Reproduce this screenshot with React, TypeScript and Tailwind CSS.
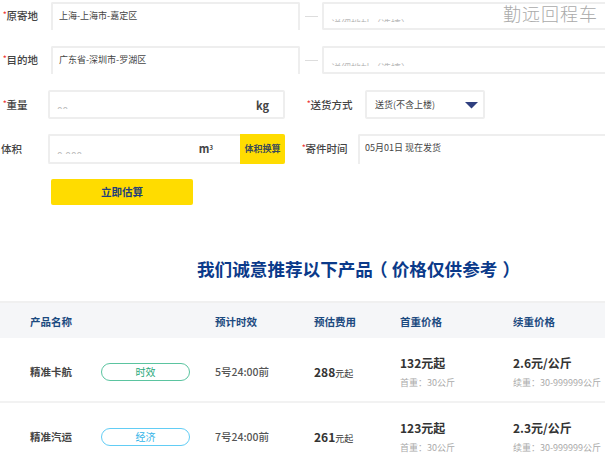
const font = "font-['Noto_Sans_CJK_SC','Noto_Sans',sans-serif]";

const Label = ({ text, star = true, className = '' }: { text: string; star?: boolean; className?: string }) => (
  <div className={`shrink-0 flex items-center text-[10.500px] font-medium leading-none text-[#444] ${className}`}>
    {star && <span className="text-[#e33] text-[7px] font-bold -mt-[3px]">*</span>}
    {text}
  </div>
);

// placeholder text is cut off by the bottom of its box in the source
const Clipped = ({ text }: { text: string }) => (
  <div className="h-[3px] overflow-hidden text-[10px] leading-[10px] text-[#bbbbbb] whitespace-nowrap">{text}</div>
);

const AddressRow = ({ label, value }: { label: string; value: string }) => (
  <div className="flex h-[28px] mb-[16px]">
    <Label text={label} className="w-[51px] pl-[3px] h-[28px]" />
    <div className="w-[249px] border-2 border-b-0 border-[#eeeeee] rounded-t-[2px] pl-[6px] pt-[5px] text-[9px] leading-[14px] text-[#444]">
      {value}
    </div>
    <div className="w-[13px] h-px bg-[#dddddd] ml-[5px] mr-[4px] mt-[14px]" />
    <div className="flex-1 border-2 border-r-0 border-[#eeeeee] rounded-l-[2px] pl-[7px] pt-[15px]">
      <Clipped text="详细地址（选填）" />
    </div>
  </div>
);

const products = [
  { name: '精准卡航', tag: '时效', tagClass: 'border-[#5bc4a0] text-[#2aa87c]', time: '5号24:00前', fee: '288', first: '132元起', next: '2.6元/公斤' },
  { name: '精准汽运', tag: '经济', tagClass: 'border-[#62cdf5] text-[#35b5e8]', time: '7号24:00前', fee: '261', first: '123元起', next: '2.3元/公斤' },
];

const cols = 'grid grid-cols-[71px_114px_99px_86px_113px_1fr] pl-[30px]';

export default function App() {
  return (
    <div className={`relative w-[605px] h-[456px] overflow-hidden bg-white ${font}`}>
      <div className="absolute right-[7px] top-[1px] text-[18px] font-light leading-[24px] tracking-[1px] text-[#aaaaaa]">
        勤远回程车
      </div>

      <div className="pt-[2px]">
        <AddressRow label="原寄地" value="上海-上海市-嘉定区" />
        <AddressRow label="目的地" value="广东省-深圳市-罗湖区" />

        <div className="flex h-[29px] mb-[15px]">
          <Label text="重量" className="w-[48px] pl-[3px] pt-[1px]" />
          <div className="w-[237px] flex border-2 border-[#eeeeee] rounded-[2px] pl-[7px] pr-[14px] justify-between">
            <div className="pt-[14px]"><Clipped text="00" /></div>
            <span className="text-[11px] font-bold leading-[27px] text-[#444]">kg</span>
          </div>
          <Label text="送货方式" className="w-[57px] ml-[22px] pt-[1px]" />
          <div className="w-[120px] ml-px flex items-center justify-between border-2 border-[#eeeeee] rounded-[2px] pl-[8px] pr-[4px] text-[9px] text-[#444]">
            送货(不含上楼)
            <svg width="14" height="8" viewBox="0 0 14 8"><path d="M0 1h13L6.500 7.500z" fill="#2f3f7f" /></svg>
          </div>
        </div>

        <div className="flex h-[30px] mb-[15px]">
          <Label text="体积" star={false} className="w-[48px] pl-px text-[#444]" />
          <div className="w-[237px] flex border-2 border-r-0 border-[#eeeeee] rounded-[2px] pl-[7px]">
            <div className="flex-1 pt-[15px]"><Clipped text="0.000" /></div>
            <span className="text-[11px] font-bold leading-[24px] text-[#444] mr-[27px]">m<sup className="text-[6px]">3</sup></span>
            <div className="w-[45px] -my-[2px] flex items-center justify-center bg-[#ffdc00] rounded-r-[2px] text-[9px] font-bold text-[#3b4a5a]">体积换算</div>
          </div>
          <Label text="寄件时间" className="w-[56px] ml-[17px]" />
          <div className="flex-1 border-2 border-b-0 border-r-0 border-[#eeeeee] rounded-tl-[2px] pl-[5px] pt-[5px] text-[9px] leading-[14px] text-[#444]">
            05月01日 现在发货
          </div>
        </div>

        <div className="w-[142px] h-[26px] ml-[51px] flex items-center justify-center bg-[#ffdc00] rounded-[2px] text-[10.500px] font-bold text-[#1f3f7a]">
          立即估算
        </div>
      </div>

      <h2 className="mt-[51px] pl-[197px] h-[30px] text-[17.600px] font-bold leading-[26px] whitespace-nowrap text-[#0b3a8a]">
        我们诚意推荐以下产品<span className="inline-block ml-[5px] mr-[5px] [font-feature-settings:'palt']">（</span>价格仅供参考<span className="inline-block ml-[6px] [font-feature-settings:'palt']">）</span>
      </h2>

      <div className="mt-[15px] border-t-2 border-[#f0f0f0]">
        <div className={`${cols} h-[35px] pt-[2px] items-center bg-[#f5f6f8] text-[10.500px] font-bold text-[#1c4a80]`}>
          <span className="col-span-2">产品名称</span>
          <span>预计时效</span>
          <span>预估费用</span>
          <span>首重价格</span>
          <span>续重价格</span>
        </div>
        {products.map((p) => (
          <div key={p.name} className={`${cols} h-[65px] pt-[4px] items-center border-b-2 border-[#f2f2f2] whitespace-nowrap`}>
            <span className="text-[10.500px] font-bold text-[#444]">{p.name}</span>
            <span className={`w-[89px] h-[18px] flex items-center justify-center rounded-full border text-[10px] ${p.tagClass}`}>{p.tag}</span>
            <span className="text-[10.500px] font-medium text-[#555]">{p.time}</span>
            <span className="text-[12px] font-bold text-[#333]">{p.fee}<span className="text-[9px] font-normal">元起</span></span>
            <div>
              <div className="text-[12px] font-bold leading-[18px] text-[#333]">{p.first}</div>
              <div className="mt-[5px] text-[9px] leading-[12px] text-[#aaaaaa]">首重：30公斤</div>
            </div>
            <div>
              <div className="text-[12px] font-bold leading-[18px] text-[#333]">{p.next}</div>
              <div className="mt-[5px] text-[9px] leading-[12px] text-[#aaaaaa]">续重：30-999999公斤</div>
            </div>
          </div>
        ))}
      </div>
    </div>
  );
}
